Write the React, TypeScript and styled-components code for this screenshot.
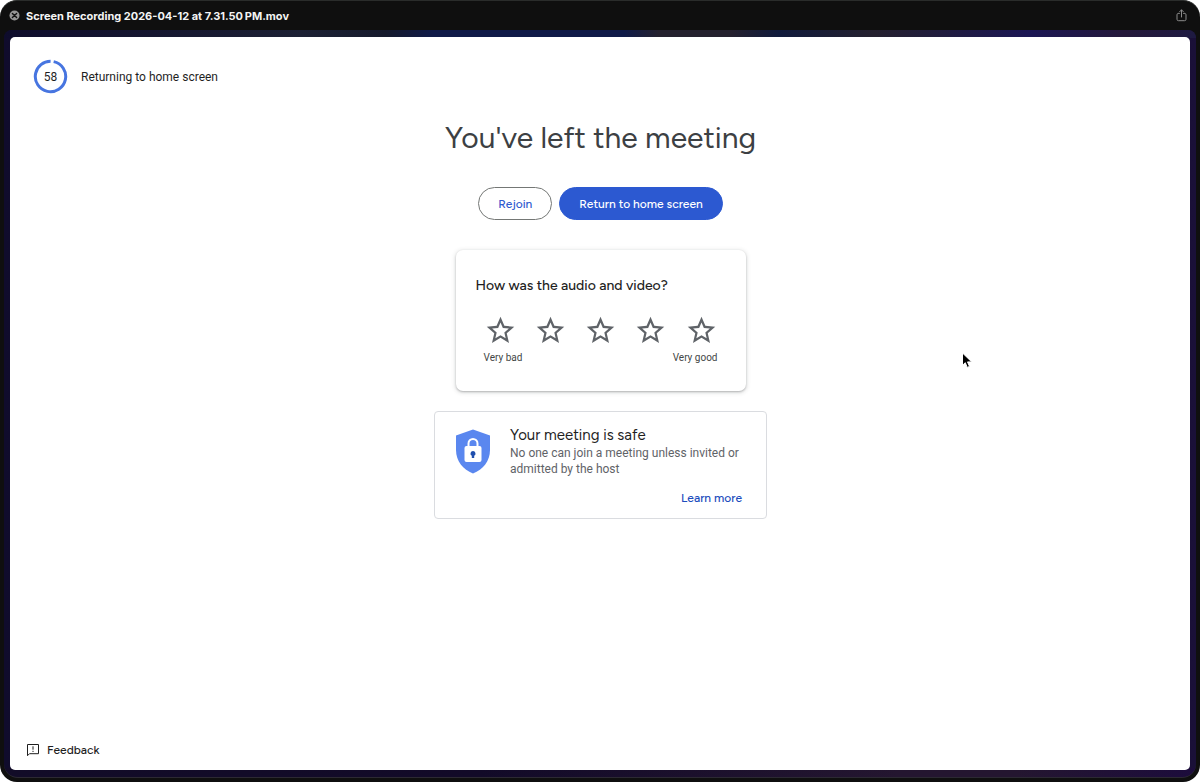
import React, { useState } from "react";
import styled, { createGlobalStyle, css } from "styled-components";

const sans = `Figtree, Lato, "Liberation Sans", sans-serif`;
const body = `Roboto, "Liberation Sans", sans-serif`;

const GlobalStyle = createGlobalStyle`
  *, *::before, *::after { box-sizing: border-box; }
  body { margin: 0; background: #ffffff; font-family: ${body}; color: #1f1f1f; }
  button, input { font: inherit; margin: 0; }
`;

const Window = styled.div`
  position: relative;
  min-height: 100vh;
  display: flex;
  flex-direction: column;
  padding: 0 4px 4px;
  border-top: 1px solid #2a2c2b;
  border-radius: 17px;
  background: #0f0f0f;
  overflow: hidden;
`;

const TitleBar = styled.header`
  display: flex;
  align-items: center;
  gap: 6px;
  height: 29px;
  padding: 0 9px 0 5px;
`;

const IconButton = styled.button`
  display: flex;
  padding: 0;
  border: 0;
  background: none;
  color: #8c8c8c;
`;

const FileName = styled.h2`
  flex: 1;
  margin: 0;
  font: 700 11px/16px Inter, sans-serif;
  color: #f4f4f4;
`;

const Desktop = styled.div`
  flex: 1;
  display: flex;
  padding: 7px 6px 7px;
  border-bottom: 1px solid #2c2933;
  border-radius: 8px 8px 14px 14px;
  background:
    linear-gradient(90deg, #0e0c2c, #1c2034 25%, #151a2c 32%, #0f1a48 36%, #0f1a48 52%, #24202e 55%, #24202e 61%, #101a3c 65%, #24202e 73%, #1b1654 86%, #24183a 94%, #1e1a42) top / 100% 8px no-repeat,
    linear-gradient(90deg, #120c28, #120a28 40%, #241630 75%, #241630 85%, #1c0c3c) bottom / 100% 9px no-repeat,
    linear-gradient(90deg, #100c2c, #1a1038);
`;

const Page = styled.main`
  flex: 1;
  display: flex;
  flex-direction: column;
  padding: 22px 15px 10px 16px;
  border-radius: 5px;
  background: #ffffff;
`;

const Countdown = styled.div`
  display: flex;
  align-items: center;
  gap: 13px;
  padding-left: 7px;
  font-size: 12px;
  line-height: 16px;
`;

const Dial = styled.div`
  display: grid;
  place-items: center;
  width: 35px;
  height: 35px;

  > * { grid-area: 1 / 1; }
`;

const Content = styled.section`
  flex: 1;
  display: flex;
  flex-direction: column;
  align-items: center;
`;

const Heading = styled.h1`
  margin: 24px 0 0;
  font: 400 30px/40px ${sans};
  color: #3c4043;
`;

const Actions = styled.div`
  display: flex;
  gap: 7px;
  margin: 29px 0 30px;
`;

const PillButton = styled.button<{ $filled?: boolean }>`
  height: 33px;
  padding: 0 19px;
  border: 1px solid #747775;
  border-radius: 17px;
  background: #ffffff;
  color: #2f5bd0;
  font: 500 12px/16px ${sans};
  ${({ $filled }) =>
    $filled &&
    css`
      border-color: #2c59d1;
      background: #2c59d1;
      color: #ffffff;
    `}
`;

const RatingCard = styled.form`
  width: 290px;
  padding: 26px 20px 25px;
  border-radius: 7px;
  background: #ffffff;
  box-shadow: 0 1px 2px rgba(60, 64, 67, 0.3), 0 1px 4px 1px rgba(60, 64, 67, 0.15);
`;

const Question = styled.h2`
  margin: 0;
  font: 500 14px/20px ${sans};
`;

const Stars = styled.div`
  display: flex;
  justify-content: space-between;
  padding: 18px 8px 0;
`;

const StarLabel = styled.label`
  display: grid;
  width: 33px;
  height: 33px;
  color: #5f6368;

  > * { grid-area: 1 / 1; }
`;

const StarInput = styled.input`
  appearance: none;
  width: 33px;
  height: 33px;
`;

const ScaleEnds = styled.div`
  display: flex;
  justify-content: space-between;
  padding: 3px 8px 0;
  font-size: 10px;
  line-height: 16px;
  color: #444746;
`;

const SafetyCard = styled.section`
  display: grid;
  grid-template-columns: 36px 1fr;
  column-gap: 19px;
  width: 333px;
  margin-top: 20px;
  padding: 14px 20px 11px;
  border: 1px solid #dadce0;
  border-radius: 4px;
`;

const Shield = styled.svg`
  width: 36px;
  height: 45px;
  margin-top: 3px;
`;

const SafetyTitle = styled.h2`
  margin: 0;
  font: 400 15px/18px ${sans};
`;

const SafetyText = styled.p`
  margin: 1px 0 12px;
  font-size: 12px;
  line-height: 16px;
  color: #5f6368;
`;

const LearnMore = styled.a`
  display: block;
  padding-right: 4px;
  text-align: right;
  text-decoration: none;
  color: #1d4dbd;
  font: 500 12px/18px ${sans};
`;

const FeedbackButton = styled.button`
  align-self: flex-start;
  display: flex;
  align-items: center;
  gap: 7px;
  padding: 0;
  border: 0;
  background: none;
  color: #1f1f1f;
  font: 500 12px/20px ${sans};
`;

const Pointer = styled.svg`
  position: absolute;
  left: 80.1%;
  top: 44.9%;
  width: 12px;
  height: 17px;
`;

const ratings = ["Very bad", "Bad", "Fair", "Good", "Very good"];

function Star({ filled }: { filled: boolean }) {
  return (
    <svg width="33" height="33" viewBox="0 0 24 24" fill="currentColor" pointerEvents="none" aria-hidden="true">
      {filled ? (
        <path d="M12 17.27 18.18 21l-1.64-7.03L22 9.24l-7.19-.61L12 2 9.19 8.63 2 9.24l5.46 4.73L5.82 21z" />
      ) : (
        <path d="M22 9.24l-7.19-.62L12 2 9.19 8.63 2 9.24l5.46 4.73L5.82 21 12 17.27 18.18 21l-1.63-7.03L22 9.24zM12 15.4l-3.76 2.27 1-4.28-3.32-2.88 4.38-.38L12 6.1l1.71 4.04 4.38.38-3.32 2.88 1 4.28L12 15.4z" />
      )}
    </svg>
  );
}

export default function App() {
  const [rating, setRating] = useState("");

  return (
    <>
      <GlobalStyle />
      <Window>
        <TitleBar>
          <IconButton aria-label="Close">
            <svg width="11" height="11" viewBox="0 0 11 11">
              <circle cx="5.5" cy="5.5" r="5" fill="#969696" />
              <path d="M3.4 3.4l4.2 4.2M7.6 3.4L3.4 7.6" stroke="#111" strokeWidth="1.4" strokeLinecap="round" />
            </svg>
          </IconButton>
          <FileName>Screen Recording 2026-04-12 at 7.31.50{"\u202f"}PM.mov</FileName>
          <IconButton aria-label="Share">
            <svg width="11" height="13" viewBox="0 0 11 13" fill="none" stroke="currentColor" strokeLinecap="round" strokeLinejoin="round">
              <path d="M3.4 4.5H2.2A1.2 1.2 0 0 0 1 5.7v4.6a1.4 1.4 0 0 0 1.4 1.4h6.2a1.4 1.4 0 0 0 1.4-1.4V5.7a1.2 1.2 0 0 0-1.2-1.2H7.6M5.5 8V1M3.4 3l2.1-2.2L7.6 3" />
            </svg>
          </IconButton>
        </TitleBar>

        <Desktop>
          <Page>
            <Countdown>
              <Dial>
                <svg width="35" height="35" viewBox="0 0 35 35" aria-hidden="true">
                  <circle
                    cx="17.5"
                    cy="17.5"
                    r="15.2"
                    fill="none"
                    stroke="#4775e0"
                    strokeWidth="3"
                    pathLength="60"
                    strokeDasharray="58 2"
                    transform="rotate(-78 17.5 17.5)"
                  />
                </svg>
                <span>58</span>
              </Dial>
              <span>Returning to home screen</span>
            </Countdown>

            <Content>
              <Heading>You've left the meeting</Heading>
              <Actions>
                <PillButton>Rejoin</PillButton>
                <PillButton $filled>Return to home screen</PillButton>
              </Actions>

              <RatingCard>
                <Question id="question">How was the audio and video?</Question>
                <Stars role="radiogroup" aria-labelledby="question">
                  {ratings.map((name, i) => (
                    <StarLabel key={name}>
                      <StarInput
                        type="radio"
                        name="rating"
                        value={name}
                        aria-label={name}
                        checked={rating === name}
                        onChange={() => setRating(name)}
                      />
                      <Star filled={i <= ratings.indexOf(rating)} />
                    </StarLabel>
                  ))}
                </Stars>
                <ScaleEnds>
                  <span>Very bad</span>
                  <span>Very good</span>
                </ScaleEnds>
              </RatingCard>

              <SafetyCard>
                <Shield viewBox="0 0 36 45" aria-hidden="true">
                  <path d="M18 .5L35 6.5V21c0 11-7 19.5-17 23.5C8 40.5 1 32 1 21V6.5z" fill="#5a87ef" />
                  <path d="M13.5 18v-3.5a4.5 4.5 0 0 1 9 0V18" fill="none" stroke="#fff" strokeWidth="2" />
                  <rect x="9.5" y="17" width="17" height="16" rx="2" fill="#fff" />
                  <path d="M18 22a2.5 2.5 0 0 1 1.2 4.7V29h-2.4v-2.3A2.5 2.5 0 0 1 18 22z" fill="#1f4fae" />
                </Shield>
                <div>
                  <SafetyTitle>Your meeting is safe</SafetyTitle>
                  <SafetyText>No one can join a meeting unless invited or admitted by the host</SafetyText>
                  <LearnMore href="#safety">Learn more</LearnMore>
                </div>
              </SafetyCard>
            </Content>

            <FeedbackButton>
              <svg width="14" height="14" viewBox="0 0 14 14" fill="none" stroke="currentColor" aria-hidden="true">
                <path d="M1.5 12.7V1.5h11v9.2H3.5z" />
                <path d="M7 3.3v3.4M7 7.8v1.2" />
              </svg>
              Feedback
            </FeedbackButton>
          </Page>
        </Desktop>

        <Pointer viewBox="0 0 12 17" aria-hidden="true">
          <path d="M1.5 1v12.3l2.8-2.6 1.9 4.7 2.3-1-2-4.5h4.2z" fill="#000" stroke="#fff" />
        </Pointer>
      </Window>
    </>
  );
}
